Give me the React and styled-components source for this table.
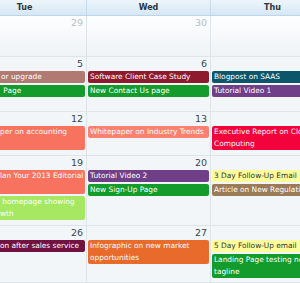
import React from 'react'
import styled, {createGlobalStyle} from 'styled-components'

const GREEN = '#139c2c'
const SALMON = '#f8735f'
const PURPLE = '#6f4088'
const YELLOW = '#fdfd9c'

const GlobalStyle = createGlobalStyle`
  html, body {
    margin: 0;
    padding: 0;
  }
  body {
    width: 300px;
    height: 283px;
    overflow: hidden;
    background: #f3f6f9;
    font-family: 'DejaVu Sans', Verdana, sans-serif;
  }
`

// the Tue column starts off screen, like the scrolled month view
const Calendar = styled.div`
  margin-left: -37px;
  width: 372px;
`

const HeadRow = styled.div`
  display: grid;
  grid-template-columns: repeat(3, 124px);
  height: 15px;
  background: linear-gradient(#edf5fb, #d6e7f4);
  border-bottom: 1px solid #bdd5e8;
`

const HeadCell = styled.div`
  border-right: 1px solid #c6dbeb;
  font-weight: bold;
  font-size: 8px;
  line-height: 15px;
  text-align: center;
  color: #2b3742;
`

const Week = styled.div`
  display: grid;
  grid-template-columns: repeat(3, 124px);
  height: ${({$h}) => $h}px;
`

const Day = styled.div`
  border-right: 1px solid #dde4ea;
  border-bottom: 1px solid #dde4ea;
  background: ${({$other}) => ($other ? 'linear-gradient(#fdfeff, #eff3f6)' : '#f3f6f9')};
  overflow: hidden;
`

const DayNum = styled.div`
  height: 14px;
  padding-right: 3px;
  text-align: right;
  font-size: 9.5px;
  line-height: 14px;
  color: ${({$other}) => ($other ? '#b9bfc5' : '#3a4550')};
`

const Event = styled.div`
  margin: 0 1px 2px;
  padding: 0 2px 0 ${({$pad}) => $pad}px;
  min-height: ${({$lines}) => $lines * 12}px;
  border-radius: 2px;
  background: ${({$bg}) => $bg};
  color: ${({$dark}) => ($dark ? '#333' : '#fff')};
  font-size: 7.4px;
  line-height: 12px;
  white-space: ${({$nowrap}) => ($nowrap ? 'nowrap' : 'normal')};
  overflow: hidden;
`

const weeks = [
  {h: 41, other: true, days: [{n: 29}, {n: 30}, {n: 31}]},
  {
    h: 55,
    days: [
      {n: 5, events: [{t: 'or upgrade', bg: '#b07a72', pad: 37}, {t: '\u00a0Page', bg: GREEN, pad: 37}]},
      {n: 6, events: [{t: 'Software Client Case Study', bg: '#8e1b2d'}, {t: 'New Contact Us page', bg: GREEN}]},
      {n: 7, events: [{t: 'Blogpost on SAAS', bg: '#0c566b'}, {t: 'Tutorial Video 1', bg: PURPLE}]}
    ]
  },
  {
    h: 44,
    days: [
      {n: 12, events: [{t: 'per on accounting', bg: SALMON, pad: 36, lines: 2}]},
      {n: 13, events: [{t: 'Whitepaper on Industry Trends', bg: '#fa8170'}]},
      {n: 14, events: [{t: 'Executive Report on Cloud Computing', bg: '#f2033b'}]}
    ]
  },
  {
    h: 70,
    days: [
      {
        n: 19,
        events: [
          {t: 'lan Your 2013 Editorial', bg: SALMON, pad: 36, lines: 2},
          {t: ['\u00a0homepage showing', 'wth'], bg: '#a6e861', pad: 36}
        ]
      },
      {n: 20, events: [{t: 'Tutorial Video 2', bg: PURPLE}, {t: 'New Sign-Up Page', bg: GREEN}]},
      {n: 21, events: [{t: '3 Day Follow-Up Email', bg: YELLOW, dark: true}, {t: 'Article on New Regulations', bg: '#9b7b57'}]}
    ]
  },
  {
    h: 57,
    days: [
      {n: 26, events: [{t: 'on after sales service', bg: '#711240', pad: 36}]},
      {n: 27, events: [{t: 'Infographic on new market opportunities', bg: '#e96b2b'}]},
      {n: 28, events: [{t: '5 Day Follow-Up email', bg: YELLOW, dark: true}, {t: 'Landing Page testing new tagline', bg: GREEN}]}
    ]
  }
]

const EventText = ({t}) =>
  Array.isArray(t) ? t.map((line, i) => <React.Fragment key={i}>{i > 0 && <br />}{line}</React.Fragment>) : t

const App = () => {
  return (
    <>
      <GlobalStyle />
      <Calendar>
        <HeadRow>
          {['Tue', 'Wed', 'Thu'].map(d => (
            <HeadCell key={d}>{d}</HeadCell>
          ))}
        </HeadRow>
        {weeks.map(week => (
          <Week key={week.days[0].n} $h={week.h}>
            {week.days.map(day => (
              <Day key={day.n} $other={week.other}>
                <DayNum $other={week.other}>{day.n}</DayNum>
                {(day.events || []).map((ev, i) => (
                  <Event
                    key={i}
                    $bg={ev.bg}
                    $dark={ev.dark}
                    $pad={ev.pad || 2}
                    $lines={ev.lines || 1}
                    $nowrap={Boolean(ev.pad)}
                  >
                    <EventText t={ev.t} />
                  </Event>
                ))}
              </Day>
            ))}
          </Week>
        ))}
      </Calendar>
    </>
  )
}

export default App
